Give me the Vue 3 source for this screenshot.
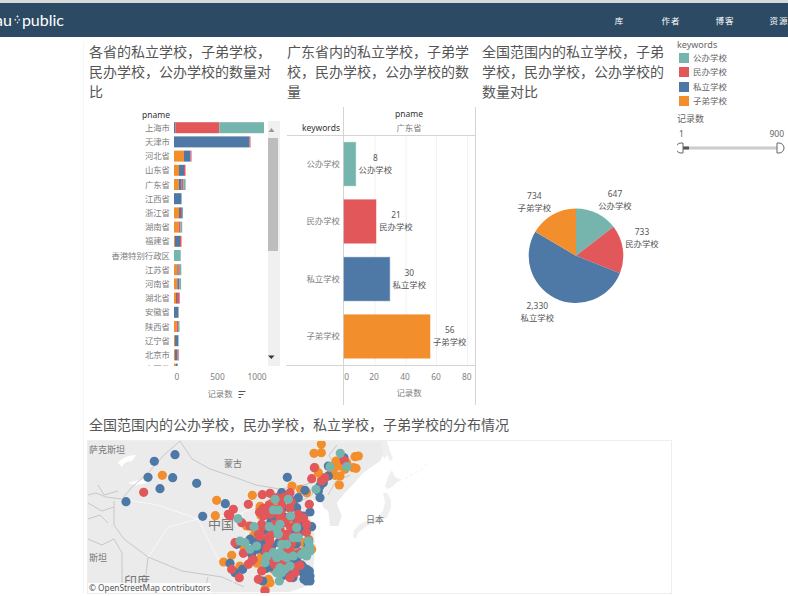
<template>
  <div class="page">
    <header class="topbar">
      <div class="logo">
        <span>au</span>
        <svg class="logo-mark" viewBox="0 0 8 10" width="7" height="9">
          <path d="M4 0v3M2.500 1.500h3M1.500 4v2.600M.4 5.300h2.200M6 4.200v2.400M4.900 5.400h2.200M4 7.400v2.200M3 8.500h2" stroke="#fff" stroke-width=".7" fill="none" />
        </svg>
        <span>public</span>
      </div>
      <nav class="nav">
        <a class="nav-first">库</a>
        <a>作者</a>
        <a>博客</a>
        <a>资源</a>
      </nav>
    </header>

    <div class="dash">
      <div class="main">
        <div class="charts">
          <section class="cell">
            <h2 class="title">各省的私立学校，子弟学校，民办学校，公办学校的数量对比</h2>
            <svg class="chart" viewBox="84 105 198 300" width="198" height="300">
              <defs>
                <clipPath id="bar-clip"><rect x="84" y="121" width="184" height="245" /></clipPath>
              </defs>
              <text class="head" x="156" y="118" text-anchor="middle">pname</text>
              <g clip-path="url(#bar-clip)">
                <g v-for="row in provinceRows" :key="row.name">
                  <text class="tick" x="170" :y="row.y + 3" text-anchor="end">{{ row.name }}</text>
                  <rect v-for="seg in row.segs" :key="seg.x" :x="seg.x" :y="row.y - 5.500" :width="seg.w" height="11" :fill="seg.color" />
                </g>
              </g>
              <rect x="268" y="121" width="12" height="245" fill="#f0f0f0" />
              <rect x="268" y="138" width="10" height="113" fill="#bdbdbd" />
              <path d="M268.500 132l3-4 3 4z" fill="#999" />
              <path d="M268 355.500h6.500l-3.200 3.500z" fill="#333" />
              <text class="tick" x="177" y="380" text-anchor="middle">0</text>
              <text class="tick" x="217.500" y="380" text-anchor="middle">500</text>
              <text class="tick" x="257" y="380" text-anchor="middle">1000</text>
              <text class="tick" x="220" y="397" text-anchor="middle">记录数</text>
              <path d="M238.500 391.500h7M238.500 394.500h5M238.500 397.500h2.500" stroke="#555" stroke-width="1" />
            </svg>
          </section>

          <section class="cell">
            <h2 class="title">广东省内的私立学校，子弟学校，民办学校，公办学校的数量</h2>
            <svg class="chart" viewBox="282 105 195 300" width="195" height="300">
              <path d="M375 136v230M406 136v230M436.500 136v230M467.500 136v230" stroke="#f2f2f2" />
              <path d="M343.500 107v298M475.500 107v298M287 135.500h188.500M286 365.500h189.500" stroke="#d4d4d4" fill="none" />
              <text class="head" x="409" y="117" text-anchor="middle">pname</text>
              <text class="tick" x="409" y="131" text-anchor="middle">广东省</text>
              <text class="head" x="340" y="131" text-anchor="end">keywords</text>
              <g v-for="bar in guangdongBars" :key="bar.name">
                <text class="tick" x="340" :y="bar.y + 24.500" text-anchor="end">{{ bar.name }}</text>
                <rect x="344" :y="bar.y" :width="bar.w" height="43.500" :fill="bar.color" :stroke="bar.color" stroke-opacity=".5" />
                <text class="mark" :x="bar.lx" :y="bar.y + 18.500" text-anchor="middle">{{ bar.value }}</text>
                <text class="mark" :x="bar.lx" :y="bar.y + 30.500" text-anchor="middle">{{ bar.name }}</text>
              </g>
              <text class="tick" x="346.700" y="380" text-anchor="middle">0</text>
              <text class="tick" x="374" y="380" text-anchor="middle">20</text>
              <text class="tick" x="405" y="380" text-anchor="middle">40</text>
              <text class="tick" x="436" y="380" text-anchor="middle">60</text>
              <text class="tick" x="466.700" y="380" text-anchor="middle">80</text>
              <text class="tick" x="409" y="396" text-anchor="middle">记录数</text>
            </svg>
          </section>

          <section class="cell">
            <h2 class="title">全国范围内的私立学校，子弟学校，民办学校，公办学校的数量对比</h2>
            <svg class="chart" viewBox="477 105 195 300" width="195" height="300">
              <path v-for="s in pieSlices" :key="s.name" :d="s.d" :fill="s.color" />
              <g v-for="s in pieSlices" :key="s.name + '-label'">
                <text class="mark" :x="s.lx" :y="s.ly" text-anchor="middle">{{ s.label }}</text>
                <text class="mark" :x="s.lx" :y="s.ly + 12" text-anchor="middle">{{ s.name }}</text>
              </g>
            </svg>
          </section>
        </div>

        <h2 class="title map-title">全国范围内的公办学校，民办学校，私立学校，子弟学校的分布情况</h2>
        <div class="map">
          <svg viewBox="0 0 583 152" width="583" height="152">
            <path :d="landPath" fill="#ebebeb" />
            <path d="M293 0l6 0 3 10 3 8-3 2-3-6-3 4-2-8zM297 45l3-9 4-7 3 7 7 3-5 2-5 5-5 2zM295 52l4 0 4 7 0 8-4 9-7 5-9 2-7 4-6 5-2 6-3-2 1-7 6-6 9-4 8-3 6-6 2-9z" fill="#efefef" />
            <path d="M317 38l8-5 6-3 6-5 5-5" fill="none" stroke="#f2f2f2" stroke-width="1" stroke-dasharray="3 3" />
            <path d="M30 22q6-8 18-8l-4 6q-8 0-10 6zM40 42l14-4 6 4-12 2z" fill="#fff" />
            <g fill="none" stroke="#c8c8c8" stroke-width="1">
              <path d="M92 0l12 18 18 10 24 8 22 8 24 4 24-4 20-6 10-14-5-10 8-10" />
              <path d="M92 0L76 14 60 32 44 46 34 58l-16-2-10-4-8 2" />
              <path d="M26 60l0 24 10 14 24 18 34 14 40 6 22 10" />
              <path d="M0 62l14 8 12-4M0 98l14 6 12-6 8 14 0 40M120 136l-4 16M60 116l-4 36M10 44l6 10 14-4M0 78l12-4 8 8" />
              <path d="M230 38l-6 16-18 10M240 54l8-14 14-6" />
            </g>
            <g fill="none" stroke="#f8f8f8" stroke-width="1">
              <path d="M34 58l36 6 40 14 44-6 30-14M60 116l20-30 30-8M110 78l20 40 30 12M154 72l10 46-20 24" />
            </g>
            <text class="map-label" x="1" y="12">萨克斯坦</text>
            <text class="map-label" x="145" y="26" text-anchor="middle">蒙古</text>
            <text class="map-label" x="10" y="120" text-anchor="middle">斯坦</text>
            <text class="map-label" x="287" y="82" text-anchor="middle">日本</text>
            <text class="map-label big" x="133" y="88" text-anchor="middle">中国</text>
            <text class="map-label big" x="49" y="145" text-anchor="middle">印度</text>
            <circle v-for="(d, i) in mapDots" :key="i" :cx="d.x" :cy="d.y" r="4.600" :fill="d.color" />
          </svg>
          <span class="attribution">© OpenStreetMap contributors</span>
        </div>
      </div>

      <aside class="side">
        <div class="side-title">keywords</div>
        <ul class="legend">
          <li v-for="k in keywords" :key="k.name">
            <i class="swatch" :style="{ background: k.color }"></i>{{ k.name }}
          </li>
        </ul>
        <div class="side-title range-title">记录数</div>
        <div class="range-values"><span>1</span><span>900</span></div>
        <svg class="slider" viewBox="0 0 110 12" width="110" height="12">
          <rect x="5" y="4.500" width="95" height="3" fill="#ccc" />
          <rect x="5" y="4.500" width="7" height="3" fill="#555" />
          <path d="M6 1H4a5 5 0 0 0 0 10h2zM100 1h2a5 5 0 0 1 0 10h-2z" fill="#fff" stroke="#666" />
        </svg>
      </aside>
    </div>
  </div>
</template>

<script setup>
const TEAL = '#76b5ae'
const RED = '#e1575a'
const BLUE = '#4e79a6'
const ORANGE = '#f28e2b'

const keywords = [
  { name: '公办学校', color: TEAL },
  { name: '民办学校', color: RED },
  { name: '私立学校', color: BLUE },
  { name: '子弟学校', color: ORANGE },
]

// bar pieces are in pixels: orange, blue, red, teal
const provinces = [
  ['上海市', 0, 1.3, 44, 44.7],
  ['天津市', 0, 75.5, 1, 0],
  ['河北省', 10, 6.5, 1, 0],
  ['山东省', 5, 5, 1.5, 0],
  ['广东省', 4.8, 2.6, 1.8, 2.4],
  ['江西省', 0, 7.4, 0, 0.5],
  ['浙江省', 5, 2, 1, 1],
  ['湖南省', 4.5, 0, 2, 1.7],
  ['福建省', 1, 5, 1.5, 0],
  ['香港特别行政区', 0, 0, 0, 6.7],
  ['江苏省', 3.3, 1, 1.5, 1.5],
  ['河南省', 3.3, 2, 0.5, 1.3],
  ['湖北省', 2, 1, 2.7, 0],
  ['安徽省', 0, 4, 0.5, 0.5],
  ['陕西省', 2.5, 0, 1.5, 1.5],
  ['辽宁省', 1, 3, 0, 0.7],
  ['北京市', 1, 2.3, 1.3, 0.5],
  ['山西省', 2, 1, 0, 1],
]

const provinceRows = provinces.map((p, i) => {
  const colors = [ORANGE, BLUE, RED, TEAL]
  let x = 174
  const segs = []
  colors.forEach((color, c) => {
    const w = p[c + 1]
    if (w > 0) {
      segs.push({ x, w, color })
      x += w
    }
  })
  return { name: p[0], y: 127.7 + i * 14.2, segs }
})

const guangdongBars = [
  { name: '公办学校', value: 8, color: TEAL, y: 142.3, w: 11.7, lx: 375.3 },
  { name: '民办学校', value: 21, color: RED, y: 199.7, w: 32, lx: 396 },
  { name: '私立学校', value: 30, color: BLUE, y: 257.3, w: 45.7, lx: 409.3 },
  { name: '子弟学校', value: 56, color: ORANGE, y: 314.7, w: 86, lx: 449.7 },
]

const pieData = [
  { name: '公办学校', value: 647, label: '647', color: TEAL, lx: 615, ly: 197 },
  { name: '民办学校', value: 733, label: '733', color: RED, lx: 642, ly: 235 },
  { name: '私立学校', value: 2330, label: '2,330', color: BLUE, lx: 537.3, ly: 309 },
  { name: '子弟学校', value: 734, label: '734', color: ORANGE, lx: 534.3, ly: 199 },
]

const pieSlices = (() => {
  const cx = 576
  const cy = 255.7
  const r = 47.3
  const total = pieData.reduce((sum, s) => sum + s.value, 0)
  let angle = -Math.PI / 2
  return pieData.map((s) => {
    const end = angle + (s.value / total) * Math.PI * 2
    const large = end - angle > Math.PI ? 1 : 0
    const d = `M${cx} ${cy}L${cx + r * Math.cos(angle)} ${cy + r * Math.sin(angle)}A${r} ${r} 0 ${large} 1 ${cx + r * Math.cos(end)} ${cy + r * Math.sin(end)}Z`
    angle = end
    return { ...s, d }
  })
})()

// coastline, read off the reference at 3x
const coast = [[470, 16], [462, 50], [450, 75], [400, 110], [365, 150], [345, 170], [320, 200], [335, 240], [325, 270], [300, 270], [295, 225], [280, 215], [275, 200], [245, 190], [225, 225], [250, 260], [255, 330], [250, 400], [230, 450], [180, 468]]
const landPath = 'M0 0' + coast.map(([x, y]) => `L${x / 3 + 142} ${y / 3 - 5}`).join('') + 'L0 152Z'

// dot places are 3x map pixels
const toMap = (x, y, color) => ({ x: x / 3 - 8, y: y / 3 - 5, color })

const fixedDots = {
  [ORANGE]: [[247, 118], [410, 193], [406, 239], [517, 178], [724, 24], [702, 52], [724, 50], [705, 95], [768, 75], [778, 90], [760, 100], [800, 80], [825, 62], [835, 60], [820, 95], [828, 97], [715, 110], [725, 130], [750, 115], [780, 120], [778, 147], [765, 118], [795, 100], [636, 150], [662, 160], [680, 170], [455, 358], [431, 378], [540, 218], [500, 270], [555, 295], [600, 290], [545, 360], [490, 330], [480, 390], [565, 430], [570, 440], [580, 400], [640, 250], [680, 280], [670, 320], [695, 340], [600, 300], [555, 460], [520, 300]],
  [BLUE]: [[285, 56], [223, 76], [204, 124], [278, 125], [240, 158], [350, 142], [138, 197], [368, 241], [436, 203], [622, 124], [792, 65], [745, 90], [720, 150], [715, 165], [720, 185], [675, 163], [730, 140], [745, 120], [605, 170], [655, 185], [640, 195], [470, 325], [510, 310], [525, 320], [545, 320], [550, 335], [530, 340], [515, 355], [575, 330], [580, 365], [570, 380], [620, 385], [640, 365], [610, 305], [590, 240], [610, 215], [650, 215], [690, 228], [670, 240], [695, 272], [488, 400], [465, 410], [450, 382], [548, 435], [680, 400], [670, 410], [688, 405], [675, 420], [690, 420], [680, 435], [672, 430], [690, 435], [660, 280], [625, 295], [600, 190]],
  [RED]: [[191, 169], [793, 74], [703, 95], [695, 128], [735, 125], [725, 135], [630, 170], [570, 172], [547, 176], [688, 205], [505, 205], [460, 220], [445, 235], [450, 240], [550, 240], [570, 235], [545, 265], [540, 295], [590, 220], [600, 245], [630, 215], [655, 235], [670, 245], [680, 265], [610, 260], [650, 265], [510, 270], [485, 260], [535, 295], [465, 320], [490, 352], [520, 370], [505, 385], [515, 375], [545, 405], [535, 430], [455, 400], [478, 425], [610, 295], [630, 345], [660, 388], [645, 410], [630, 425], [580, 370], [575, 345], [625, 245], [590, 185], [555, 465]],
  [TEAL]: [[781, 52], [800, 92], [750, 92], [708, 160], [474, 248], [522, 272], [585, 190], [625, 190], [580, 222], [595, 222], [632, 240], [568, 272], [600, 265], [590, 280], [595, 295], [650, 275], [640, 305], [655, 305], [480, 315], [495, 320], [510, 340], [530, 330], [605, 325], [620, 325], [685, 315], [688, 330], [675, 345], [690, 345], [680, 360], [665, 355], [600, 350], [610, 360], [590, 365], [620, 365], [640, 360], [555, 380], [600, 395], [615, 400], [630, 390], [605, 410], [590, 410], [598, 435], [580, 350], [560, 362]],
}

// filler under the hand-placed dots: [colour, centre x, centre y, radius x, radius y, count]
const clusters = [
  [ORANGE, 590, 310, 100, 120, 30],
  [BLUE, 610, 320, 78, 115, 50],
  [RED, 600, 300, 80, 120, 45],
]

let seed = 7
const rand = () => {
  seed = (seed * 16807) % 2147483647
  return seed / 2147483647
}

const mapDots = [ORANGE, BLUE, RED, TEAL].flatMap((color) => {
  const dots = []
  clusters.filter((c) => c[0] === color).forEach(([, cx, cy, rx, ry, n]) => {
    for (let i = 0; i < n; i++) {
      const a = rand() * Math.PI * 2
      const r = Math.sqrt(rand())
      dots.push(toMap(cx + Math.cos(a) * r * rx, cy + Math.sin(a) * r * ry, color))
    }
  })
  fixedDots[color].forEach(([x, y]) => dots.push(toMap(x, y, color)))
  return dots
})
</script>

<style>
html, body {
  margin: 0;
  background: #fff;
  overflow: hidden;
}
</style>

<style scoped>
.page {
  width: 788px;
  height: 596px;
  overflow: hidden;
  font-family: "Noto Sans", "Noto Sans CJK SC", sans-serif;
  color: #555;
}

.topbar {
  height: 34px;
  border-top: 3px solid #d8d8d8;
  background: #2c4a63;
  color: #fff;
  display: flex;
  align-items: center;
  justify-content: space-between;
}

.logo {
  display: flex;
  align-items: center;
  margin-left: -5px;
  font-family: Lato, sans-serif;
  font-size: 16px;
  line-height: 1;
}

.logo-mark {
  margin: 0 1px 2px 2px;
}

.nav {
  display: flex;
  font-size: 8.500px;
  letter-spacing: 1px;
  margin-right: -18px;
}

.nav a {
  width: 54px;
  text-align: center;
}

.nav a.nav-first {
  width: 49px;
}

.dash {
  display: flex;
  padding-left: 84px;
  padding-top: 5px;
}

.main {
  width: 588px;
  box-shadow: -1px 0 #f6f6f6;
}

.charts {
  display: flex;
}

.title {
  margin: 0;
  padding-left: 5px;
  font-size: 14px;
  font-weight: 400;
  line-height: 20px;
  color: #555;
}

.cell {
  display: flex;
  flex-direction: column;
}

.cell .title {
  height: 63px;
  width: 188px;
}

.chart {
  display: block;
}

.head {
  font-size: 8.500px;
  fill: #333;
}

.tick {
  font-size: 8.400px;
  fill: #808080;
}

.mark {
  font-size: 8.400px;
  fill: #555;
}

.map-title {
  margin-top: 10px;
}

.map {
  position: relative;
  width: 583px;
  height: 152px;
  margin: 6px 0 0 4px;
  outline: 1px solid #eee;
  overflow: hidden;
}

.map svg {
  display: block;
}

.map-label {
  font-size: 9px;
  fill: #777;
}

.map-label.big {
  font-size: 13px;
}

.attribution {
  position: absolute;
  left: 0;
  bottom: 0;
  padding: 0 1px;
  background: rgba(255, 255, 255, .85);
  font-size: 8.300px;
  line-height: 10px;
  color: #555;
}

.side {
  margin-top: -3px;
  padding-left: 5px;
  width: 111px;
  font-size: 8.500px;
  color: #666;
}

.side-title {
  line-height: 12px;
  font-size: 9px;
}

.legend {
  list-style: none;
  margin: 0;
  padding: 0 0 0 2px;
}

.legend li {
  display: flex;
  align-items: center;
  height: 14.300px;
  line-height: 14px;
}

.swatch {
  width: 10px;
  height: 10px;
  margin-right: 4px;
}

.range-title {
  margin-top: 5px;
}

.range-values {
  display: flex;
  justify-content: space-between;
  width: 107px;
  padding: 3px 0 0 2px;
  line-height: 12px;
  box-sizing: border-box;
}

.slider {
  display: block;
  margin-top: 2px;
}
</style>
